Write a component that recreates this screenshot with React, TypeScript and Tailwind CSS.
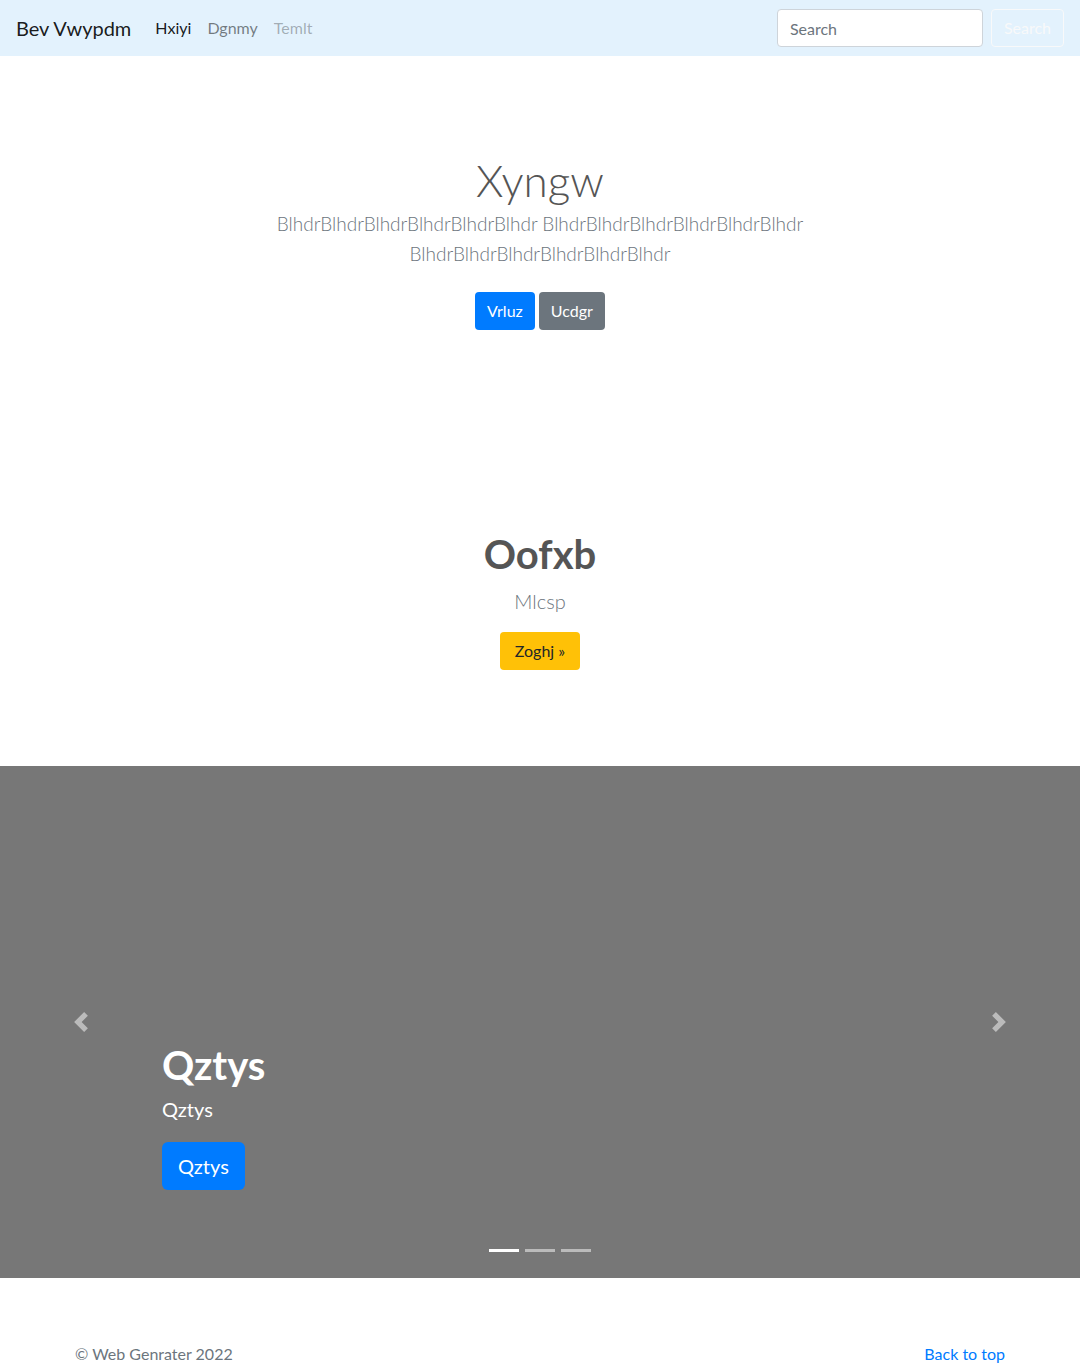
import React from 'react';

const font = { fontFamily: 'Lato, "Noto Sans", sans-serif' };

const navLinks = [
  { name: 'Hxiyi', cls: 'text-black/90' },
  { name: 'Dgnmy', cls: 'text-black/50' },
  { name: 'Temlt', cls: 'text-black/30' },
];

const PrevIcon = () => (
  <svg viewBox="0 0 8 8" className="w-5 h-5" fill="#fff">
    <path d="M5.25 0l-4 4 4 4 1.5-1.5L4.25 4l2.5-2.5L5.25 0z" />
  </svg>
);

const NextIcon = () => (
  <svg viewBox="0 0 8 8" className="w-5 h-5" fill="#fff">
    <path d="M2.75 0l-1.5 1.5L3.75 4l-2.5 2.5L2.75 8l4-4-4-4z" />
  </svg>
);

export default function App() {
  return (
    <div className="bg-white text-[#212529] text-base" style={font}>
      {/* Navbar */}
      <nav className="bg-[#e3f2fd] h-14 px-4 flex items-center">
        <a href="#" className="text-xl leading-[30px] text-black/90 mr-4">
          Bev Vwypdm
        </a>
        <ul className="flex items-center">
          {navLinks.map((l) => (
            <li key={l.name}>
              <a href="#" className={`block px-2 py-2 leading-6 ${l.cls}`}>
                {l.name}
              </a>
            </li>
          ))}
        </ul>
        <form className="ml-auto flex items-center">
          <input
            type="text"
            placeholder="Search"
            className="w-[206px] h-[38px] px-3 rounded border border-[#ced4da] bg-white text-base placeholder:text-[#6c757d] mr-2 outline-none"
          />
          <button
            type="button"
            className="h-[38px] px-3 rounded border border-[#f8f9fa] text-[#f8f9fa] text-base"
          >
            Search
          </button>
        </form>
      </nav>

      {/* Hero */}
      <section className="pt-24 pb-24 text-center">
        <div className="mx-auto max-w-[610px]">
          <h1 className="text-[44px] leading-[57px] font-light text-[#555]">Xyngw</h1>
          <p className="text-[19px] leading-[30px] font-light text-[#6c757d] mb-[23px]">
            BlhdrBlhdrBlhdrBlhdrBlhdrBlhdr BlhdrBlhdrBlhdrBlhdrBlhdrBlhdr BlhdrBlhdrBlhdrBlhdrBlhdrBlhdr
          </p>
          <div className="flex justify-center gap-1 mb-2">
            <a href="#" className="h-[38px] px-3 leading-[38px] rounded bg-[#007bff] text-white">
              Vrluz
            </a>
            <a href="#" className="h-[38px] px-3 leading-[38px] rounded bg-[#6c757d] text-white">
              Ucdgr
            </a>
          </div>
        </div>
      </section>

      {/* Feature */}
      <section className="pt-24 pb-24 text-center">
        <h2 className="text-[40px] leading-[48px] font-bold text-[#555] mb-2">Oofxb</h2>
        <p className="text-xl leading-[30px] font-light text-[#6c757d] mb-4">Mlcsp</p>
        <div className="flex justify-center">
          <a href="#" className="h-[38px] px-[15px] leading-[38px] rounded bg-[#ffc107] text-[#212529]">
            Zoghj &raquo;
          </a>
        </div>
      </section>

      {/* Carousel */}
      <div className="relative h-[512px] bg-[#777] mb-16 overflow-hidden">
        <div className="absolute left-[15%] right-[15%] bottom-12 pt-5 pb-5 text-white">
          <h1 className="text-[40px] leading-[48px] font-bold mb-[5px]">Qztys</h1>
          <p className="text-xl leading-[30px] mb-[18px]">Qztys</p>
          <div className="mb-5">
            <a href="#" className="inline-block h-12 px-4 leading-[48px] text-xl rounded-md bg-[#007bff] text-white">
              Qztys
            </a>
          </div>
        </div>

        <a href="#" className="absolute top-0 bottom-0 left-0 w-[15%] flex items-center justify-center opacity-50">
          <PrevIcon />
        </a>
        <a href="#" className="absolute top-0 bottom-0 right-0 w-[15%] flex items-center justify-center opacity-50">
          <NextIcon />
        </a>

        <ol className="absolute left-0 right-0 bottom-4 flex justify-center gap-[6px]">
          <li className="w-[30px] h-[3px] my-[10px] bg-white" />
          <li className="w-[30px] h-[3px] my-[10px] bg-white/50" />
          <li className="w-[30px] h-[3px] my-[10px] bg-white/50" />
        </ol>
      </div>

      {/* Footer */}
      <footer className="w-[960px] mx-auto px-[15px] flex justify-between">
        <p className="leading-6 text-[#6c757d]">&copy; Web Genrater 2022</p>
        <p className="leading-6">
          <a href="#" className="text-[#007bff]">Back to top</a>
        </p>
      </footer>
    </div>
  );
}
